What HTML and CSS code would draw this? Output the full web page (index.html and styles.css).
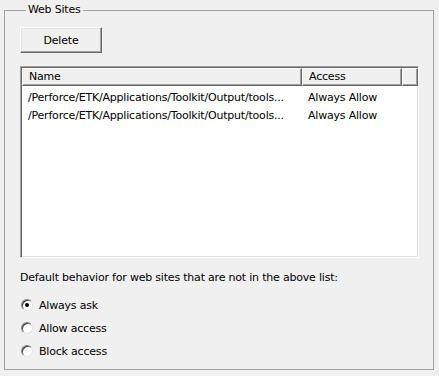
FILE: index.html
```html
<html>
  <head>
    <link rel="stylesheet" href="styles.css">
    <title>Web Sites</title>
  </head>
  <body>
    <fieldset class="group">
      <legend>Web Sites</legend>
      <button class="btn">Delete</button>
      <div class="listview">
        <div class="header">
          <div class="col col-name">Name</div>
          <div class="col col-access">Access</div>
          <div class="col col-rest"></div>
        </div>
        <div class="row">
          <div class="cell cell-name">/Perforce/ETK/Applications/Toolkit/Output/tools...</div>
          <div class="cell cell-access">Always Allow</div>
        </div>
        <div class="row">
          <div class="cell cell-name">/Perforce/ETK/Applications/Toolkit/Output/tools...</div>
          <div class="cell cell-access">Always Allow</div>
        </div>
      </div>
      <p class="label">Default behavior for web sites that are not in the above list:</p>
      <div class="radios">
        <label class="radio"><span class="dot checked"></span>Always ask</label>
        <label class="radio"><span class="dot"></span>Allow access</label>
        <label class="radio"><span class="dot"></span>Block access</label>
      </div>
    </fieldset>
  </body>
</html>
```

FILE: styles.css
```css
body {
  margin: 3px 5px 6px 4px;
  background: #f0f0f0;
  font-family: "DejaVu Sans", Tahoma, sans-serif;
  font-size: 11px;
  letter-spacing: -0.2px;
  color: #000;
}

.group {
  margin: 0;
  padding: 0 0 0 15px;
  width: 430px;
  height: 367px;
  border: 1px solid #a0a0a0;
  box-sizing: border-box;
  display: block;
}
.group legend {
  margin-left: 6px;
  padding: 0 2px;
  line-height: 14px;
}

.btn {
  display: block;
  margin-top: 10px;
  width: 82px;
  height: 26px;
  background: #f0f0f0;
  font-family: inherit;
  font-size: 11px;
  letter-spacing: inherit;
  color: #000;
  border: 1px solid;
  border-color: #fff #696969 #696969 #fff;
  box-shadow: inset -1px -1px 0 #a0a0a0, inset 1px 1px 0 #e3e3e3;
  padding: 0;
}

.listview {
  margin-top: 13px;
  width: 399px;
  height: 192px;
  box-sizing: border-box;
  background: #fff;
  border: 1px solid;
  border-color: #a0a0a0 #fff #fff #a0a0a0;
  box-shadow: inset 1px 1px 0 #696969, inset -1px -1px 0 #e3e3e3;
  padding: 1px 0 0 1px;
}

.header {
  display: flex;
  height: 18px;
}
.col {
  box-sizing: border-box;
  height: 18px;
  line-height: 16px;
  padding-left: 6px;
  background: #f0f0f0;
  border: 1px solid;
  border-color: #fff #696969 #696969 #fff;
  box-shadow: inset -1px -1px 0 #a0a0a0;
}
.col-name {
  width: 280px;
}
.col-access {
  width: 100px;
}
.col-rest {
  width: 16px;
}

.row {
  display: flex;
  height: 18px;
  line-height: 18px;
}
.header + .row {
  margin-top: 3px;
}
.cell {
  padding-left: 6px;
  box-sizing: border-box;
  white-space: nowrap;
  overflow: hidden;
}
.cell-name {
  width: 280px;
}
.cell-access {
  width: 100px;
}

.label {
  margin: 13px 0 0 0;
  line-height: 14px;
}

.radios {
  margin-top: 13px;
  display: flex;
  flex-direction: column;
  gap: 9px;
}
.radio {
  display: flex;
  align-items: center;
  height: 14px;
}
.dot {
  width: 12px;
  height: 12px;
  box-sizing: border-box;
  border-radius: 50%;
  background: #fff;
  border: 1px solid;
  border-color: #808080 #e3e3e3 #e3e3e3 #808080;
  box-shadow: inset 1px 1px 0 #404040;
  margin: 0 6px 0 1px;
  display: flex;
  align-items: center;
  justify-content: center;
}
.dot.checked::after {
  content: "";
  width: 4px;
  height: 4px;
  border-radius: 50%;
  background: #000;
}
```
